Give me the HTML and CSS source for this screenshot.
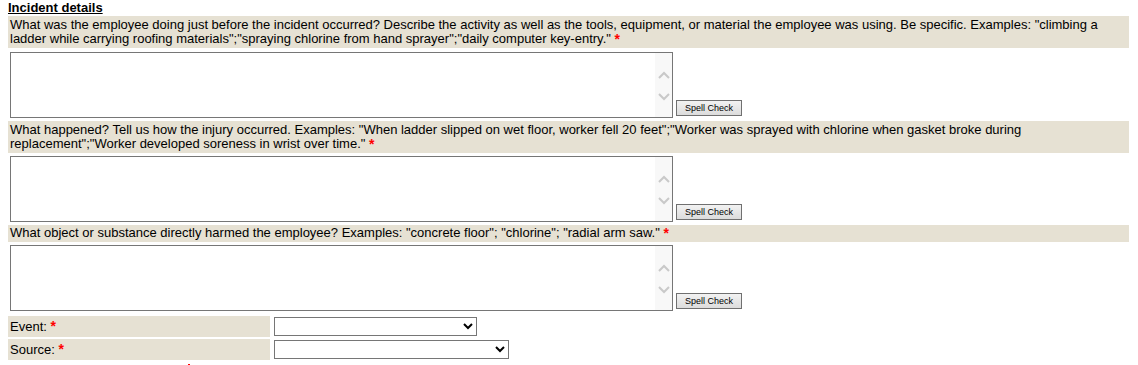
FILE: index.html
```html
<!DOCTYPE html>
<html lang="en">

<head>
    <meta charset="UTF-8">
    <title>Incident details</title>
    <link rel="stylesheet" href="styles.css">
</head>

<body>

    <div class="section-title">Incident details</div>

    <!-- Question 1 -->
    <div class="question">
        What was the employee doing just before the incident occurred? Describe the activity as well as the tools, equipment, or material the employee was using. Be specific. Examples: "climbing a ladder while carrying roofing materials";"spraying chlorine from hand sprayer";"daily computer key-entry." <span class="req">*</span>
    </div>
    <div class="answer">
        <div class="text-box">
            <textarea></textarea>
            <div class="scroll">
                <svg width="14" height="10" viewBox="0 0 14 10"><path d="M2 8 L7 3 L12 8" fill="none" stroke="#c9c9c9" stroke-width="2"/></svg>
                <svg width="14" height="10" viewBox="0 0 14 10"><path d="M2 2 L7 7 L12 2" fill="none" stroke="#c9c9c9" stroke-width="2"/></svg>
            </div>
        </div>
        <button class="spell" type="button">Spell Check</button>
    </div>

    <!-- Question 2 -->
    <div class="question">
        What happened? Tell us how the injury occurred. Examples: "When ladder slipped on wet floor, worker fell 20 feet";"Worker was sprayed with chlorine when gasket broke during replacement";"Worker developed soreness in wrist over time." <span class="req">*</span>
    </div>
    <div class="answer tight">
        <div class="text-box">
            <textarea></textarea>
            <div class="scroll">
                <svg width="14" height="10" viewBox="0 0 14 10"><path d="M2 8 L7 3 L12 8" fill="none" stroke="#c9c9c9" stroke-width="2"/></svg>
                <svg width="14" height="10" viewBox="0 0 14 10"><path d="M2 2 L7 7 L12 2" fill="none" stroke="#c9c9c9" stroke-width="2"/></svg>
            </div>
        </div>
        <button class="spell" type="button">Spell Check</button>
    </div>

    <!-- Question 3 -->
    <div class="question single">
        What object or substance directly harmed the employee? Examples: "concrete floor"; "chlorine"; "radial arm saw." <span class="req">*</span>
    </div>
    <div class="answer tight last">
        <div class="text-box">
            <textarea></textarea>
            <div class="scroll">
                <svg width="14" height="10" viewBox="0 0 14 10"><path d="M2 8 L7 3 L12 8" fill="none" stroke="#c9c9c9" stroke-width="2"/></svg>
                <svg width="14" height="10" viewBox="0 0 14 10"><path d="M2 2 L7 7 L12 2" fill="none" stroke="#c9c9c9" stroke-width="2"/></svg>
            </div>
        </div>
        <button class="spell" type="button">Spell Check</button>
    </div>

    <!-- Event / Source -->
    <div class="pick-row">
        <div class="pick-label">Event: <span class="req">*</span></div>
        <select class="pick event"><option></option></select>
    </div>
    <div class="pick-row">
        <div class="pick-label">Source: <span class="req">*</span></div>
        <select class="pick source"><option></option></select>
    </div>
    <div class="cut-off"><span class="mark"></span></div>

</body>

</html>
```

FILE: styles.css
```css
* {
    box-sizing: border-box;
}

body {
    margin: 0 8px;
    padding: 0;
    background: #fff;
    color: #000;
    font-family: 'Liberation Sans', Arial, sans-serif;
    font-size: 13px;
}

.section-title {
    font-size: 13px;
    font-weight: bold;
    text-decoration: underline;
    line-height: 15px;
}

.question {
    width: 1121px;
    margin-top: 1px;
    padding: 2px 2px 2px;
    line-height: 14px;
    background: #e6e1d3;
}

.question.single {
    padding: 1px 2px 2px;
}

.req {
    color: #f00;
    font-weight: bold;
    font-size: 14px;
    line-height: 14px;
    vertical-align: top;
}

.pick-label .req {
    line-height: 21px;
}

/* textarea + spell check */
.answer {
    display: flex;
    align-items: flex-end;
    padding: 4px 0 2px 2px;
}

.answer.tight {
    padding-top: 3px;
}

.answer.last {
    padding-bottom: 5px;
}

.text-box {
    display: flex;
    width: 663px;
    height: 66px;
    border: 1px solid #767676;
    background: #fff;
}

.text-box textarea {
    flex: 1;
    border: none;
    outline: none;
    resize: none;
    font-family: inherit;
    font-size: 12px;
}

.scroll {
    width: 17px;
    background: #f8f8f8;
    display: flex;
    flex-direction: column;
    align-items: center;
    justify-content: center;
    gap: 12px;
    padding-top: 2px;
}

.spell {
    width: 66px;
    height: 16px;
    margin: 0 0 2px 3px;
    padding: 0;
    font-family: inherit;
    font-size: 9px;
    line-height: 14px;
    color: #000;
    border: 1px solid #707070;
    border-radius: 0;
    background: linear-gradient(#f2f2f2, #dcdcdc);
}

/* dropdown rows */
.pick-row {
    display: flex;
    align-items: center;
    gap: 4px;
    margin-bottom: 2px;
}

.pick-label {
    width: 262px;
    height: 21px;
    line-height: 21px;
    padding-left: 2px;
    background: #e6e1d3;
}

.pick {
    height: 19px;
    border: 1px solid #767676;
    border-radius: 0;
    background: #fff;
    font-family: inherit;
    font-size: 12px;
}

.pick.event {
    width: 203px;
}

.pick.source {
    width: 235px;
}

.cut-off {
    height: 6px;
    position: relative;
}

.mark {
    position: absolute;
    left: 180px;
    top: 2px;
    width: 2px;
    height: 2px;
    background: #f00;
}
```
